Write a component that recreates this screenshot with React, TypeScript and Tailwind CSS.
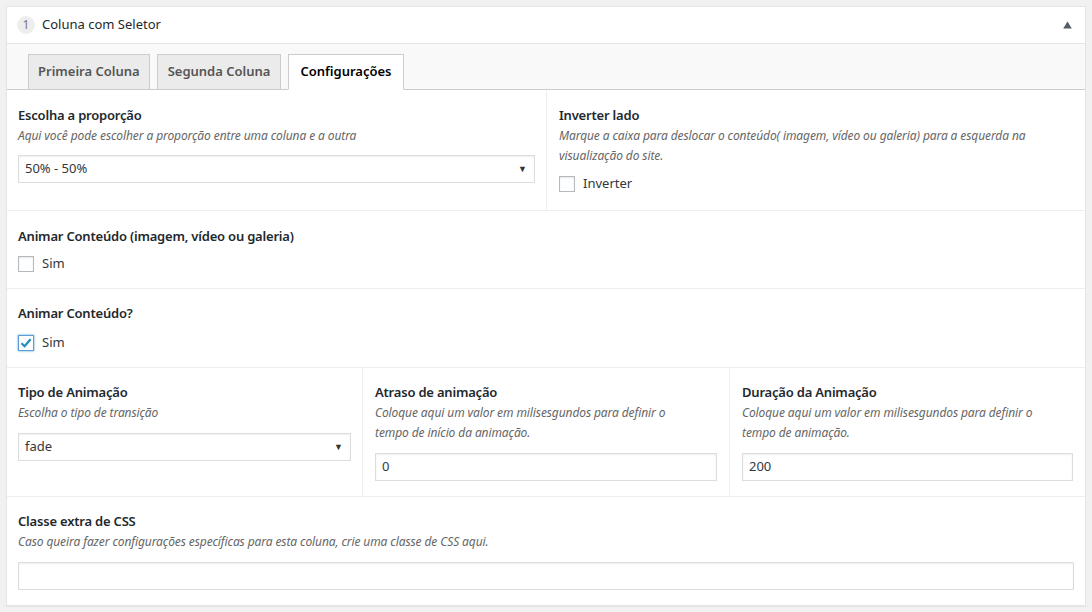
import React from 'react';

const font = { fontFamily: '"Noto Sans", "Open Sans", sans-serif' };

const Title: React.FC<{ children: React.ReactNode }> = ({ children }) => (
  <div className="text-[13px] leading-[20px] font-semibold tracking-[-0.2px] text-[#23282d] mb-[1px]">{children}</div>
);

const Desc: React.FC<{ children: React.ReactNode; className?: string }> = ({ children, className }) => (
  <div className={`text-[12px] leading-[20px] italic tracking-[-0.1px] text-[#666] ${className ?? ''}`}>{children}</div>
);

const Select: React.FC<{ value: string; className?: string }> = ({ value, className }) => (
  <div className={`h-[28px] border border-[#ddd] shadow-[inset_0_1px_2px_rgba(0,0,0,0.07)] bg-white flex items-center justify-between px-[6px] text-[13px] text-[#32373c] ${className ?? ''}`}>
    <span>{value}</span>
    <span className="text-[9px] text-[#333] pr-[1px]">▼</span>
  </div>
);

const Input: React.FC<{ value?: string }> = ({ value }) => (
  <div className="mt-[10px] h-[28px] border border-[#ddd] shadow-[inset_0_1px_2px_rgba(0,0,0,0.07)] bg-white flex items-center px-[6px] text-[13px] text-[#32373c]">
    {value}
  </div>
);

const Check: React.FC<{ label: string; checked?: boolean; className?: string }> = ({ label, checked, className }) => (
  <div className={`flex items-center gap-[8px] h-[16px] ${className ?? ''}`}>
    <span
      className={
        checked
          ? 'w-[16px] h-[16px] border border-[#5b9dd9] shadow-[0_0_2px_rgba(30,140,190,0.8)] bg-white flex items-center justify-center'
          : 'w-[16px] h-[16px] border border-[#b4b9be] shadow-[inset_0_1px_2px_rgba(0,0,0,0.1)] bg-white'
      }
    >
      {checked && (
        <svg width="14" height="14" viewBox="0 0 14 14">
          <path d="M2.5 7.2 L5.6 10.2 L11.6 3.2" fill="none" stroke="#1e8cbe" strokeWidth="2.2" />
        </svg>
      )}
    </span>
    <span className="text-[13px] text-[#32373c]">{label}</span>
  </div>
);

export default function App() {
  return (
    <div className="w-[1092px] h-[612px] bg-[#f1f1f1] pt-[6px] pl-[6px]" style={font}>
      <div className="w-[1080px] h-[600px] border border-[#e5e5e5] bg-white shadow-[0_1px_1px_rgba(0,0,0,0.04)] flex flex-col">
        {/* header */}
        <div className="h-[37px] border-b border-[#e5e5e5] flex items-center pl-[10px] pr-[13px]">
          <span className="w-[18px] h-[18px] rounded-full bg-[#eee] text-[12px] text-[#777] flex items-center justify-center">1</span>
          <span className="ml-[7px] text-[13px] text-[#23282d]">Coluna com Seletor</span>
          <svg className="ml-auto" width="9" height="8" viewBox="0 0 9 8">
            <path d="M4.5 0.5 L8.8 7.5 L0.2 7.5 Z" fill="#555d66" />
          </svg>
        </div>
        {/* tabs */}
        <div className="h-[46px] bg-[#f9f9f9] border-b border-[#ccc] flex items-end pl-[21px] gap-[7px]">
          <div className="h-[36px] -mb-px border border-[#ccc] bg-[#ebebeb] px-[9px] flex items-center text-[13px] font-semibold text-[#555]">Primeira Coluna</div>
          <div className="h-[36px] -mb-px border border-[#ccc] bg-[#ebebeb] px-[10px] flex items-center text-[13px] font-semibold text-[#555]">Segunda Coluna</div>
          <div className="h-[36px] -mb-px border border-[#ccc] border-b-white bg-white px-[11px] flex items-center text-[13px] font-semibold text-[#000]">Configurações</div>
        </div>
        {/* row 1 */}
        <div className="grid grid-cols-[540px_1fr] border-b border-[#eee]">
          <div className="pt-[15px] pb-[16px] px-[11px] border-r border-[#eee]">
            <Title>Escolha a proporção</Title>
            <Desc>Aqui você pode escolher a proporção entre uma coluna e a outra</Desc>
            <Select value="50% - 50%" className="mt-[9px]" />
          </div>
          <div className="pt-[15px] pb-[18px] pl-[12px] pr-[11px]">
            <Title>Inverter lado</Title>
            <Desc>Marque a caixa para deslocar o conteúdo( imagem, vídeo ou galeria) para a esquerda na visualização do site.</Desc>
            <Check label="Inverter" className="mt-[10px]" />
          </div>
        </div>
        {/* row 2 */}
        <div className="pt-[15px] pb-[16px] px-[11px] border-b border-[#eee]">
          <Title>Animar Conteúdo (imagem, vídeo ou galeria)</Title>
          <Check label="Sim" className="mt-[10px]" />
        </div>
        {/* row 3 */}
        <div className="pt-[14px] pb-[16px] px-[11px] border-b border-[#eee]">
          <Title>Animar Conteúdo?</Title>
          <Check label="Sim" checked className="mt-[12px]" />
        </div>
        {/* row 4 */}
        <div className="grid grid-cols-[356px_367px_1fr] border-b border-[#eee]">
          <div className="pt-[14px] pb-[15px] px-[11px] border-r border-[#eee]">
            <Title>Tipo de Animação</Title>
            <Desc>Escolha o tipo de transição</Desc>
            <Select value="fade" className="mt-[10px]" />
          </div>
          <div className="pt-[14px] pb-[15px] px-[12px] border-r border-[#eee]">
            <Title>Atraso de animação</Title>
            <Desc className="max-w-[318px]">Coloque aqui um valor em milisesgundos para definir o tempo de início da animação.</Desc>
            <Input value="0" />
          </div>
          <div className="pt-[14px] pb-[15px] px-[12px]">
            <Title>Duração da Animação</Title>
            <Desc className="max-w-[318px]">Coloque aqui um valor em milisesgundos para definir o tempo de animação.</Desc>
            <Input value="200" />
          </div>
        </div>
        {/* row 5 */}
        <div className="pt-[14px] pb-[15px] px-[11px]">
          <Title>Classe extra de CSS</Title>
          <Desc className="mt-[1px]">Caso queira fazer configurações específicas para esta coluna, crie uma classe de CSS aqui.</Desc>
          <Input />
        </div>
      </div>
    </div>
  );
}
